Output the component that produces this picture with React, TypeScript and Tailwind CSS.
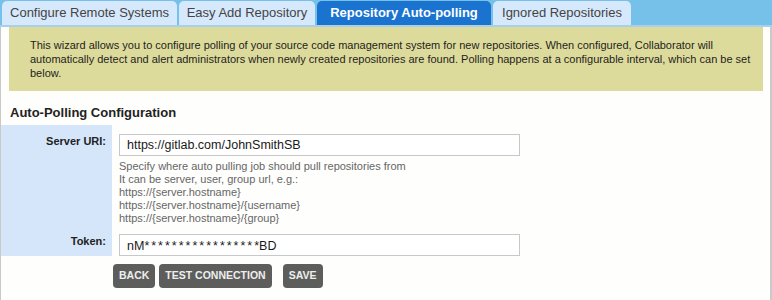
import React from 'react'

const tabs = [
  { label: 'Configure Remote Systems', width: 'w-[175px]', active: false },
  { label: 'Easy Add Repository', width: 'w-[136px]', active: false },
  { label: 'Repository Auto-polling', width: 'w-[174px]', active: true },
  { label: 'Ignored Repositories', width: 'w-[138px]', active: false },
]

const intro = [
  'This wizard allows you to configure polling of your source code management system for new repositories. When configured, Collaborator will',
  'automatically detect and alert administrators when newly created repositories are found. Polling happens at a configurable interval, which can be set',
  'below.',
]

const hints = [
  'Specify where auto pulling job should pull repositories from',
  'It can be server, user, group url, e.g.:',
  'https://{server.hostname}',
  'https://{server.hostname}/{username}',
  'https://{server.hostname}/{group}',
]

export default function App() {
  return (
    <div className="w-[772px] h-[300px] overflow-hidden bg-white font-['Liberation_Sans',Arial,sans-serif]">
      {/* Tab strip */}
      <div className="flex gap-[2px] h-[27px] pt-[1px] pl-[2px] bg-[#76c1e9] border-b-2 border-[#a9cfe9]">
        {tabs.map((t) => (
          <div
            key={t.label}
            className={
              t.active
                ? `${t.width} h-[24px] rounded-t-[5px] bg-[#1a73cf] text-white font-bold text-[13px] leading-[24px] text-center`
                : `${t.width} h-[24px] rounded-t-[5px] bg-[#d6e8fb] text-[#444] text-[13px] leading-[24px] text-center`
            }
          >
            {t.label}
          </div>
        ))}
      </div>

      {/* Page body */}
      <div className="h-[273px] border-l border-r-2 border-[#c9c9c9] bg-[#fefefd]">
        <div className="ml-[8px] mr-[7px] bg-[#dddb9b] pt-[11px] pb-[11px] pl-[21px] text-[11px] leading-[14px] text-[#1e1e1e]">
          {intro.map((line) => (
            <div key={line} className="whitespace-nowrap">{line}</div>
          ))}
        </div>

        <h2 className="mt-[14px] ml-[9px] text-[13px] leading-[16px] font-bold text-[#222]">Auto-Polling Configuration</h2>

        <div className="mt-[4px] grid grid-cols-[111px_1fr]">
          <div className="bg-[#d6e6fa] pt-[9px] pr-[6px] text-right text-[11px] leading-[14px] font-bold text-[#222]">Server URI:</div>
          <div className="pt-[9px] pl-[7px]">
            <div className="w-[401px] h-[22px] border border-[#c8c8c8] bg-white pl-[7px] text-[12.5px] leading-[20px] text-[#1a1a1a]">
              https://gitlab.com/JohnSmithSB
            </div>
            <div className="mt-[4px] text-[11px] leading-[13px] text-[#666]">
              {hints.map((h) => (
                <div key={h}>{h}</div>
              ))}
            </div>
          </div>

          <div className="bg-[#d6e6fa] pt-[9px] pr-[6px] text-right text-[11px] leading-[14px] font-bold text-[#222]">Token:</div>
          <div className="pt-[9px] pl-[7px]">
            <div className="w-[401px] h-[22px] border border-[#c8c8c8] bg-white pl-[7px] text-[12.5px] leading-[22px] text-[#1a1a1a]">
              nM<span className="tracking-[2px]">****************</span>*BD
            </div>
          </div>
        </div>

        <div className="mt-[8px] ml-[112px] flex">
          <button className="h-[24px] px-[6px] rounded-[4px] bg-[#5d5e5c] text-[#eeeeee] text-[10.5px] font-bold">BACK</button>
          <button className="ml-[4px] h-[24px] px-[6px] rounded-[4px] bg-[#5d5e5c] text-[#eeeeee] text-[10.5px] font-bold">TEST CONNECTION</button>
          <button className="ml-[11px] h-[24px] px-[6px] rounded-[4px] bg-[#5d5e5c] text-[#eeeeee] text-[10.5px] font-bold">SAVE</button>
        </div>
      </div>
    </div>
  )
}
